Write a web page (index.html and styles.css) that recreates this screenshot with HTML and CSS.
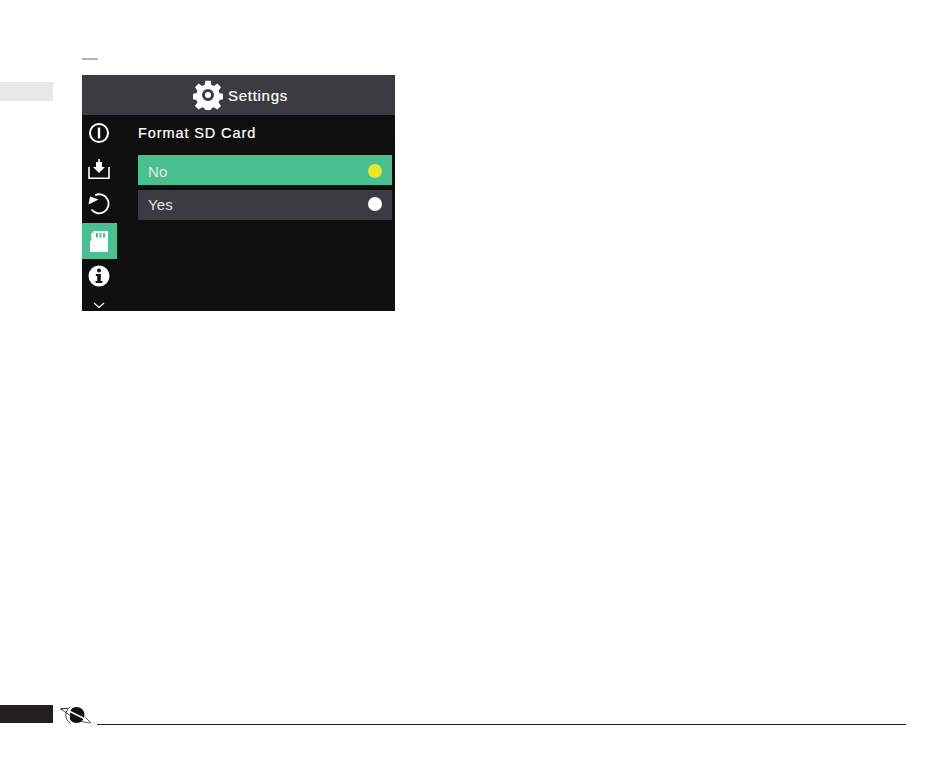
FILE: index.html
```html
<!DOCTYPE html>
<html>
    <head>
        <title>Format SD Card</title>
        <link rel="stylesheet" href="styles.css">
    </head>
    <body>
        <div class="page">
            <div class="content">
                <div class="side">
                    <div class="side-tab"></div>
                </div>
                <div class="main">
                    <div class="dash"></div>
                    <div class="screen">
                        <div class="screen-header">
                            <svg class="gear" viewBox="0 0 30 30">
                                <path fill="#fff" fill-rule="evenodd" d="M12.400 0.800h5.200l0.800 4.200 2.400 1 3.600-2.400 3.600 3.600-2.400 3.600 1 2.400 4.200 0.800v5.200l-4.200 0.800-1 2.400 2.400 3.600-3.600 3.600-3.600-2.400-2.400 1-0.800 4.200h-5.200l-0.800-4.200-2.400-1-3.600 2.400-3.600-3.600 2.400-3.600-1-2.400-4.200-0.800v-5.200l4.200-0.800 1-2.400-2.400-3.600 3.600-3.600 3.600 2.400 2.400-1zM15 9a6 6 0 1 0 0 12a6 6 0 1 0 0-12zM15 12a3 3 0 1 1 0 6a3 3 0 1 1 0-6z"/>
                            </svg>
                            <span class="screen-title">Settings</span>
                        </div>
                        <div class="screen-body">
                            <div class="menu">
                                <div class="menu-item item-power">
                                    <svg class="icon" viewBox="0 0 22 22" fill="none" stroke="#fff">
                                        <circle cx="11" cy="11" r="9" stroke-width="2"/>
                                        <path d="M11 5.500v11" stroke-width="2.400"/>
                                    </svg>
                                </div>
                                <div class="menu-item item-save">
                                    <svg class="icon" viewBox="0 0 22 22">
                                        <path fill="none" stroke="#fff" stroke-width="1.600" d="M1 9v11.200h20V9"/>
                                        <path fill="#fff" d="M10.200 1h1.600v3h2.200v5h3l-6 6-6-6h3V4h2.200z"/>
                                    </svg>
                                </div>
                                <div class="menu-item item-restore">
                                    <svg class="icon" viewBox="0 0 22 22">
                                        <path fill="none" stroke="#fff" stroke-width="1.800" d="M7 2.200A9.500 9.500 0 1 1 3.500 16.500"/>
                                        <path fill="#fff" d="M0.500 11.500L2 3.500 10.500 6.500z"/>
                                    </svg>
                                </div>
                                <div class="menu-item item-sd">
                                    <svg class="card" viewBox="0 0 18 21">
                                        <path fill="#fff" fill-rule="evenodd" d="M4 0h13a1 1 0 0 1 1 1v19a1 1 0 0 1-1 1H1a1 1 0 0 1-1-1V10.500l1.500-1.500V6.500L1 5.500V3zM6 2v4.500h2V2zM9.500 2v4.500h2V2zM13 2v4.500h2V2z"/>
                                    </svg>
                                </div>
                                <div class="menu-item item-info">
                                    <svg class="icon" viewBox="0 0 22 22">
                                        <circle cx="11" cy="11" r="10.500" fill="#fff"/>
                                        <circle cx="11" cy="5.500" r="2" fill="#0f0f0f"/>
                                        <path fill="#0f0f0f" d="M7.800 9h5v7h1.600v2H7.600v-2h1.700v-5H7.800z"/>
                                    </svg>
                                </div>
                                <div class="menu-item item-more">
                                    <svg class="chevron" viewBox="0 0 12 7" fill="none" stroke="#fff" stroke-width="1.200">
                                        <path d="M1 1l5 4.500 5-4.500"/>
                                    </svg>
                                </div>
                            </div>
                            <div class="panel">
                                <div class="panel-title">Format SD Card</div>
                                <div class="option option-on">
                                    <span>No</span>
                                    <span class="dot"></span>
                                </div>
                                <div class="option option-off">
                                    <span>Yes</span>
                                    <span class="dot"></span>
                                </div>
                            </div>
                        </div>
                    </div>
                </div>
            </div>
            <div class="footer">
                <div class="footer-tab"></div>
                <svg class="planet" viewBox="0 0 32 20">
                    <circle cx="16.500" cy="10" r="8" fill="#111"/>
                    <path fill="#fff" d="M11 3a8 8 0 0 0 0 14a10 10 0 0 1-1-7a9 9 0 0 1 2-7z"/>
                    <path fill="none" stroke="#fff" stroke-width="1.400" d="M9 6l16 8"/>
                    <path fill="none" stroke="#111" stroke-width="0.700" d="M7.500 3.300L0.500 4l5.500 3.500M6 7.500l7 5 9 4 7 1.500 1.500-0.500-5-5M0.500 4l7-0.700"/>
                    <path fill="none" stroke="#111" stroke-width="0.800" d="M10.500 1.800a9.500 9.500 0 0 0 0 16.400"/>
                </svg>
                <div class="rule"></div>
            </div>
        </div>
    </body>
</html>
```

FILE: styles.css
```css
body {
    margin: 0;
    background-color: #fff;
    font-family: 'Liberation Sans', sans-serif;
}
.page {
    height: 760px;
    display: flex;
    flex-direction: column;
    justify-content: space-between;
    overflow: hidden;
}
.content {
    display: flex;
    padding-top: 58px;
}
.side {
    width: 82px;
}
.side-tab {
    width: 53px;
    height: 19px;
    margin-top: 24px;
    background-color: #e8e8e8;
}
.dash {
    width: 16px;
    height: 2px;
    margin-bottom: 15px;
    background-color: #b4b4b4;
}
.screen {
    width: 313px;
    height: 236px;
    background-color: #0f0f0f;
    color: #fff;
}
.screen-header {
    height: 40px;
    background-color: #3c3b41;
    display: flex;
    align-items: center;
    justify-content: center;
    gap: 5px;
    padding-left: 4px;
    box-sizing: border-box;
}
.gear {
    width: 30px;
    height: 30px;
}
.screen-title {
    margin-top: 1px;
    font-size: 15px;
    letter-spacing: 0.700px;
    -webkit-text-stroke: 0.200px #fff;
}
.screen-body {
    display: flex;
}
.menu {
    width: 35px;
    height: 196px;
    display: flex;
    flex-direction: column;
}
.menu-item {
    padding-right: 2px;
    box-sizing: border-box;
    display: flex;
    align-items: center;
    justify-content: center;
}
.item-power {
    height: 36px;
}
.item-save {
    height: 36px;
}
.item-restore {
    height: 36px;
    padding-bottom: 2px;
}
.item-sd {
    height: 36px;
    background-color: #4abf91;
}
.item-info {
    height: 35px;
    padding-bottom: 2px;
}
.item-more {
    height: 17px;
    padding-top: 5px;
}
.icon {
    width: 22px;
    height: 22px;
}
.card {
    width: 18px;
    height: 21px;
}
.chevron {
    width: 12px;
    height: 7px;
}
.panel {
    width: 254px;
    margin-left: 20px;
    padding-left: 1px;
}
.panel-title {
    height: 40px;
    padding-top: 10px;
    box-sizing: border-box;
    font-size: 14.500px;
    letter-spacing: 0.900px;
    -webkit-text-stroke: 0.200px #fff;
}
.option {
    height: 30px;
    margin-bottom: 5px;
    padding: 0 10px;
    box-sizing: border-box;
    display: flex;
    align-items: center;
    justify-content: space-between;
    background-color: #3c3b41;
    color: #e6e6e6;
    font-size: 15px;
    letter-spacing: 0.200px;
}
.option-on {
    padding-top: 2px;
    background-color: #4abf91;
}
.option-off {
    padding-bottom: 2px;
}
.dot {
    width: 14px;
    height: 14px;
    border-radius: 50%;
    background-color: #fff;
}
.option-on .dot {
    background-color: #e8e82a;
}
.footer {
    display: flex;
    align-items: flex-end;
    margin-bottom: 35px;
}
.footer-tab {
    width: 53px;
    height: 18px;
    margin-bottom: 2px;
    background-color: #231f20;
}
.planet {
    width: 32px;
    height: 20px;
    margin-left: 7px;
}
.rule {
    width: 809px;
    height: 1px;
    margin-left: 5px;
    background-color: #231f20;
}
```
